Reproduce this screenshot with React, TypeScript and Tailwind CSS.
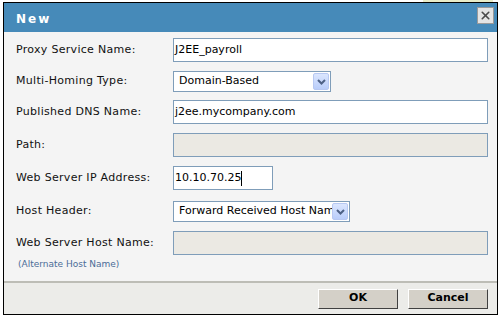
import { X } from 'lucide-react';

const font = { fontFamily: '"DejaVu Sans", Verdana, sans-serif' };

const rows = [
  { label: 'Proxy Service Name:', kind: 'text', value: 'J2EE_payroll', width: 'w-[315px]', gap: 'mt-[6px]' },
  { label: 'Multi-Homing Type:', kind: 'select', value: 'Domain-Based', width: 'w-[158px]', gap: 'mt-[9px]' },
  { label: 'Published DNS Name:', kind: 'text', value: 'j2ee.mycompany.com', width: 'w-[315px]', gap: 'mt-[8px]' },
  { label: 'Path:', kind: 'disabled', value: '', width: 'w-[315px]', gap: 'mt-[9px]' },
  { label: 'Web Server IP Address:', kind: 'cursor', value: '10.10.70.25', width: 'w-[100px]', gap: 'mt-[9px]' },
  { label: 'Host Header:', kind: 'select', value: 'Forward Received Host Name', width: 'w-[177px]', gap: 'mt-[11px]' },
  { label: 'Web Server Host Name:', kind: 'disabled', value: '', width: 'w-[315px]', gap: 'mt-[9px]' },
];

const Chevron = () => (
  <span className="absolute right-[1px] top-[1px] bottom-[1px] grid w-[16px] place-items-center rounded-[2px] border border-[#b7c8f2] bg-gradient-to-b from-[#dbe6fe] to-[#b9cdfa]">
    <svg width="9" height="6" viewBox="0 0 9 6">
      <path d="M1 1 L4.5 4.5 L8 1" fill="none" stroke="#4d6185" strokeWidth="2" />
    </svg>
  </span>
);

const Field = ({ kind, value, width }: { kind: string; value: string; width: string }) => {
  if (kind === 'select') {
    return (
      <div className={`relative flex h-[21px] items-center overflow-hidden border border-[#7f9db9] bg-white pl-[5px] text-[11px] text-black ${width}`}>
        <span className="whitespace-nowrap">{value}</span>
        <Chevron />
      </div>
    );
  }
  if (kind === 'disabled') {
    return <div className={`h-[24px] border border-[#7f9db9] bg-[#ebe9e3] ${width}`} />;
  }
  return (
    <div className={`flex h-[24px] items-center border border-[#7f9db9] bg-white pl-[1px] text-[11px] text-black ${width}`}>
      <span className="whitespace-nowrap">{value}</span>
      {kind === 'cursor' && <span className="h-[15px] w-px bg-black" />}
    </div>
  );
};

export default function App() {
  return (
    <div className="relative h-[317px] w-[501px] overflow-hidden bg-white" style={font}>
      <div className="absolute left-[423px] top-0 h-[2px] w-[70px] bg-[#e8ecc8]" />
      <div className="ml-[3px] mt-[2px] flex h-[313px] w-[495px] flex-col border border-black bg-[#f4f4f4]">
        <div className="flex h-[29px] shrink-0 items-start justify-between bg-[#468ab9] pl-[12px] pr-[3px]">
          <span className="mt-[7px] text-[12px] font-bold tracking-[2px] text-white">New</span>
          <span className="mt-[4px] grid h-[17px] w-[17px] place-items-center border border-[#9a9a9a] bg-[#e4e4e4]">
            <X className="h-[13px] w-[13px] text-[#4a4a4a]" strokeWidth={3} />
          </span>
        </div>

        <div className="flex-1 pl-[12px] pt-0 text-[11px] text-[#111]">
          {rows.map((row) => (
            <div key={row.label} className={`flex items-center ${row.gap}`}>
              <span className="w-[157px] shrink-0 tracking-[0.3px]">{row.label}</span>
              <Field kind={row.kind} value={row.value} width={row.width} />
            </div>
          ))}
          <div className="ml-[2px] mt-[3px] text-[9px] text-[#4b6c97]">(Alternate Host Name)</div>
        </div>

        <div className="h-[2px] shrink-0 bg-[#bdbdb6]" />
        <div className="flex h-[31px] shrink-0 items-center justify-end gap-[10px] bg-[#ecece9] pr-[9px]">
          <button className="h-[20px] w-[80px] border border-b-[#404040] border-l-white border-r-[#404040] border-t-white bg-[#d4d0c8] text-[11px] font-bold text-black">OK</button>
          <button className="h-[20px] w-[80px] border border-b-[#404040] border-l-white border-r-[#404040] border-t-white bg-[#d4d0c8] text-[11px] font-bold text-black">Cancel</button>
        </div>
      </div>
    </div>
  );
}
